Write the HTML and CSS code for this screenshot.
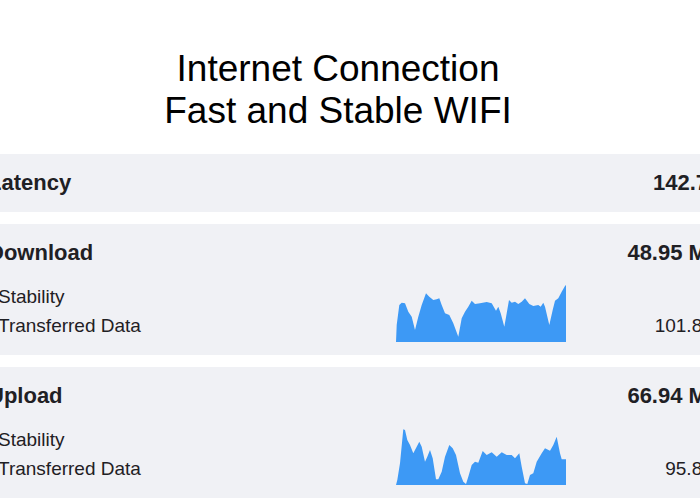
FILE: index.html
```html
<!DOCTYPE html>
<html lang="en">
<head>
<meta charset="utf-8">
<title>Internet Connection</title>
<link rel="stylesheet" href="styles.css">
</head>
<body>
<div class="page">
  <header class="header">
    <h1 class="title">Internet Connection<br>Fast and Stable WIFI</h1>
  </header>

  <section class="card">
    <div class="head"><span>Latency</span><span>142.7 ms</span></div>
  </section>

  <section class="card">
    <div class="head"><span>Download</span><span>48.95 Mbps</span></div>
    <div class="stats">
      <span class="label">Stability</span>
      <svg class="chart" viewBox="0 0 170 57" width="170" height="57" aria-hidden="true">
        <path d="M0 57 L0.7 40 L3.3 20 L5.7 17.7 L9 18.3 L12.3 26.7 L15.7 31.7 L19 45 L22.3 31.7 L25.7 20 L30 8.3 L33.3 11.7 L37.3 15 L40.7 14.3 L43.3 13.3 L45.7 20 L49 28.3 L53.3 30 L57.3 38.3 L62.3 51.7 L65.7 33.3 L69 26.7 L72.3 21.7 L75.7 15.7 L79 19 L84 18.3 L90.7 17 L95.7 18.3 L100 25.7 L102.3 21.7 L104.7 28.3 L108.3 41.7 L110.7 28.3 L113 15 L115.7 17.7 L119 16.7 L122.3 19 L125.7 16.7 L129 13.3 L133.3 19 L137.3 21 L142.3 20 L144.7 21.7 L147.3 17.7 L149 21.7 L153.3 40 L156.7 25 L159 15.7 L162.3 13.3 L165.7 6.7 L169 1 L170 0 L170 57 Z"/>
      </svg>
      <span class="label">Transferred Data</span>
      <span class="value">101.8 MB</span>
    </div>
  </section>

  <section class="card">
    <div class="head"><span>Upload</span><span>66.94 Mbps</span></div>
    <div class="stats">
      <span class="label">Stability</span>
      <svg class="chart" viewBox="0 0 170 57" width="170" height="57" aria-hidden="true">
        <path d="M0 57 L1.3 52 L4 35.3 L7.3 1.3 L9 2 L11.3 12 L14 17 L17.3 25.3 L20.7 18.7 L23.3 13.7 L25.7 18.7 L29 33.7 L31.3 28.7 L34 22 L36.7 30.3 L40 51.3 L42.3 51.3 L45.7 43.7 L49 28.7 L53.3 17 L56.7 20.3 L60 27 L64 45.3 L67.3 53.7 L70 56 L72.3 48.7 L75.7 37 L79 33.7 L82.3 34.7 L86.7 23 L90.7 27 L95.7 24.3 L100.7 28.7 L105.7 24.3 L110.7 27 L115.7 27 L119 30.3 L123.3 25.3 L125.7 38.7 L129 55.3 L131.3 56 L134 47 L137.3 45.3 L140.7 33.7 L145.7 25.3 L149 20.3 L154 22.7 L157.3 17 L160.7 8.7 L164 25.3 L165.7 31.3 L170 31.3 L170 57 Z"/>
      </svg>
      <span class="label">Transferred Data</span>
      <span class="value">95.8 MB</span>
    </div>
  </section>
</div>
</body>
</html>
```

FILE: styles.css
```css
html, body {
  margin: 0;
  padding: 0;
  background: #ffffff;
}

body {
  overflow: hidden;
  font-family: "Liberation Sans", Arial, sans-serif;
  color: #1f2024;
}

.page {
  width: 790px;
  margin-left: -28px;
}

.header {
  padding: 48px 58px 0 0;
  margin-bottom: 22px;
  text-align: center;
}

.title {
  margin: 0;
  font-size: 37px;
  line-height: 42px;
  font-weight: 400;
  color: #000000;
}

.card {
  background: #f0f1f5;
  padding: 14px 16px;
  margin-bottom: 12px;
}

.head {
  display: flex;
  justify-content: space-between;
  font-size: 22px;
  line-height: 30px;
  font-weight: 700;
}

.stats {
  display: grid;
  grid-template-columns: 398px 170px 1fr;
  grid-template-rows: 29px 29px;
  margin: 14px 0 1px;
  padding: 0 10px;
  font-size: 19px;
  line-height: 29px;
}

.label {
  grid-column: 1;
}

.chart {
  grid-column: 2;
  grid-row: 1 / 3;
  align-self: start;
  margin-top: 3px;
  display: block;
  fill: #3d99f5;
}

.value {
  grid-column: 3;
  grid-row: 2;
  text-align: right;
}
```
